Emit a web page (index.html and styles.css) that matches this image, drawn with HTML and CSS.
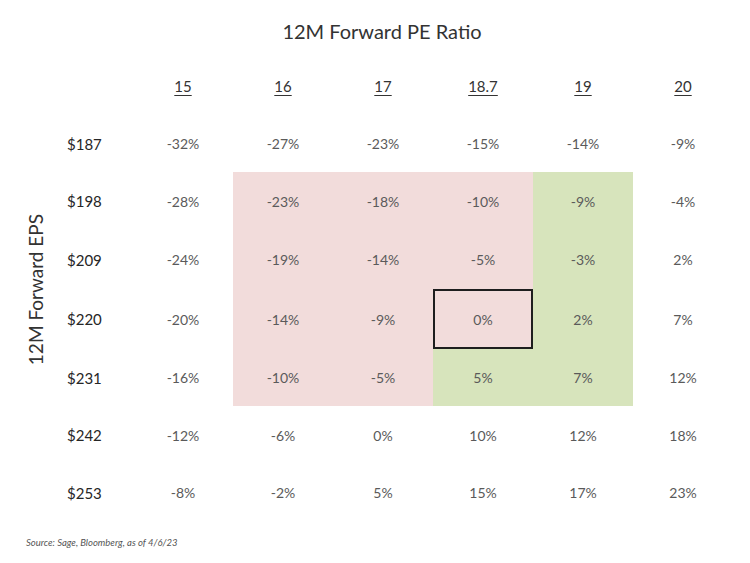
FILE: index.html
```html
<!DOCTYPE html>
<html>
<head>
<meta charset="utf-8">
<link rel="stylesheet" href="styles.css">
</head>
<body>
<div class="page">
  <h1 class="title">12M Forward PE Ratio</h1>
  <div class="main">
    <div class="axis"><span class="axis-text">12M Forward EPS</span></div>
    <div class="grid">
      <div class="corner"></div>
      <div class="head"><u>15</u></div>
      <div class="head"><u>16</u></div>
      <div class="head"><u>17</u></div>
      <div class="head"><u>18.7</u></div>
      <div class="head"><u>19</u></div>
      <div class="head"><u>20</u></div>

      <div class="lbl">$187</div>
      <div class="c">-32%</div><div class="c">-27%</div><div class="c">-23%</div><div class="c">-15%</div><div class="c">-14%</div><div class="c">-9%</div>

      <div class="lbl">$198</div>
      <div class="c">-28%</div><div class="c pink">-23%</div><div class="c pink">-18%</div><div class="c pink">-10%</div><div class="c green">-9%</div><div class="c">-4%</div>

      <div class="lbl">$209</div>
      <div class="c">-24%</div><div class="c pink">-19%</div><div class="c pink">-14%</div><div class="c pink">-5%</div><div class="c green">-3%</div><div class="c">2%</div>

      <div class="lbl">$220</div>
      <div class="c">-20%</div><div class="c pink">-14%</div><div class="c pink">-9%</div><div class="c pink boxed">0%</div><div class="c green">2%</div><div class="c">7%</div>

      <div class="lbl">$231</div>
      <div class="c">-16%</div><div class="c pink">-10%</div><div class="c pink">-5%</div><div class="c green">5%</div><div class="c green">7%</div><div class="c">12%</div>

      <div class="lbl">$242</div>
      <div class="c">-12%</div><div class="c">-6%</div><div class="c">0%</div><div class="c">10%</div><div class="c">12%</div><div class="c">18%</div>

      <div class="lbl">$253</div>
      <div class="c">-8%</div><div class="c">-2%</div><div class="c">5%</div><div class="c">15%</div><div class="c">17%</div><div class="c">23%</div>
    </div>
  </div>
  <p class="source">Source: Sage, Bloomberg, as of 4/6/23</p>
</div>
</body>
</html>
```
FILE: styles.css
```css
* { box-sizing: border-box; }
html, body { margin: 0; padding: 0; background: #fff; }
body { font-family: Lato, "Open Sans", sans-serif; color: #404040; }
.page { width: 750px; height: 563px; position: relative; overflow: hidden; }
.title {
  margin: 0;
  height: 57px;
  padding-top: 18px;
  font-size: 20px;
  font-weight: 400;
  line-height: 26px;
  text-align: center;
  color: #333;
  padding-left: 14px;
}
.main { display: flex; }
.axis {
  width: 67px;
  display: flex;
  align-items: center;
  justify-content: center;
  padding-left: 4px;
  padding-top: 2px;
}
.axis-text {
  writing-mode: vertical-rl;
  transform: rotate(180deg);
  font-size: 19px;
  color: #333;
  white-space: nowrap;
}
.grid {
  display: grid;
  grid-template-columns: 66px repeat(6, 100px);
  grid-template-rows: 58px 57px 58px 59px 60px 57px 58px 57px;
}
.head, .c, .lbl {
  display: flex;
  align-items: center;
}
.head, .c { justify-content: center; }
.head { font-size: 15px; color: #333; }
.head u { text-underline-offset: 3px; text-decoration-thickness: 1px; }
.lbl { font-size: 15px; color: #262626; font-weight: 400; }
.c { font-size: 14px; color: #5a5a5a; }
.pink { background: #f2dcdb; }
.green { background: #d7e4bc; }
.boxed { box-shadow: inset 0 0 0 2px #1e1e1e; }
.source {
  margin: 0;
  position: absolute;
  left: 26px;
  top: 537px;
  font-size: 9.5px;
  font-style: italic;
  color: #555;
}
```
